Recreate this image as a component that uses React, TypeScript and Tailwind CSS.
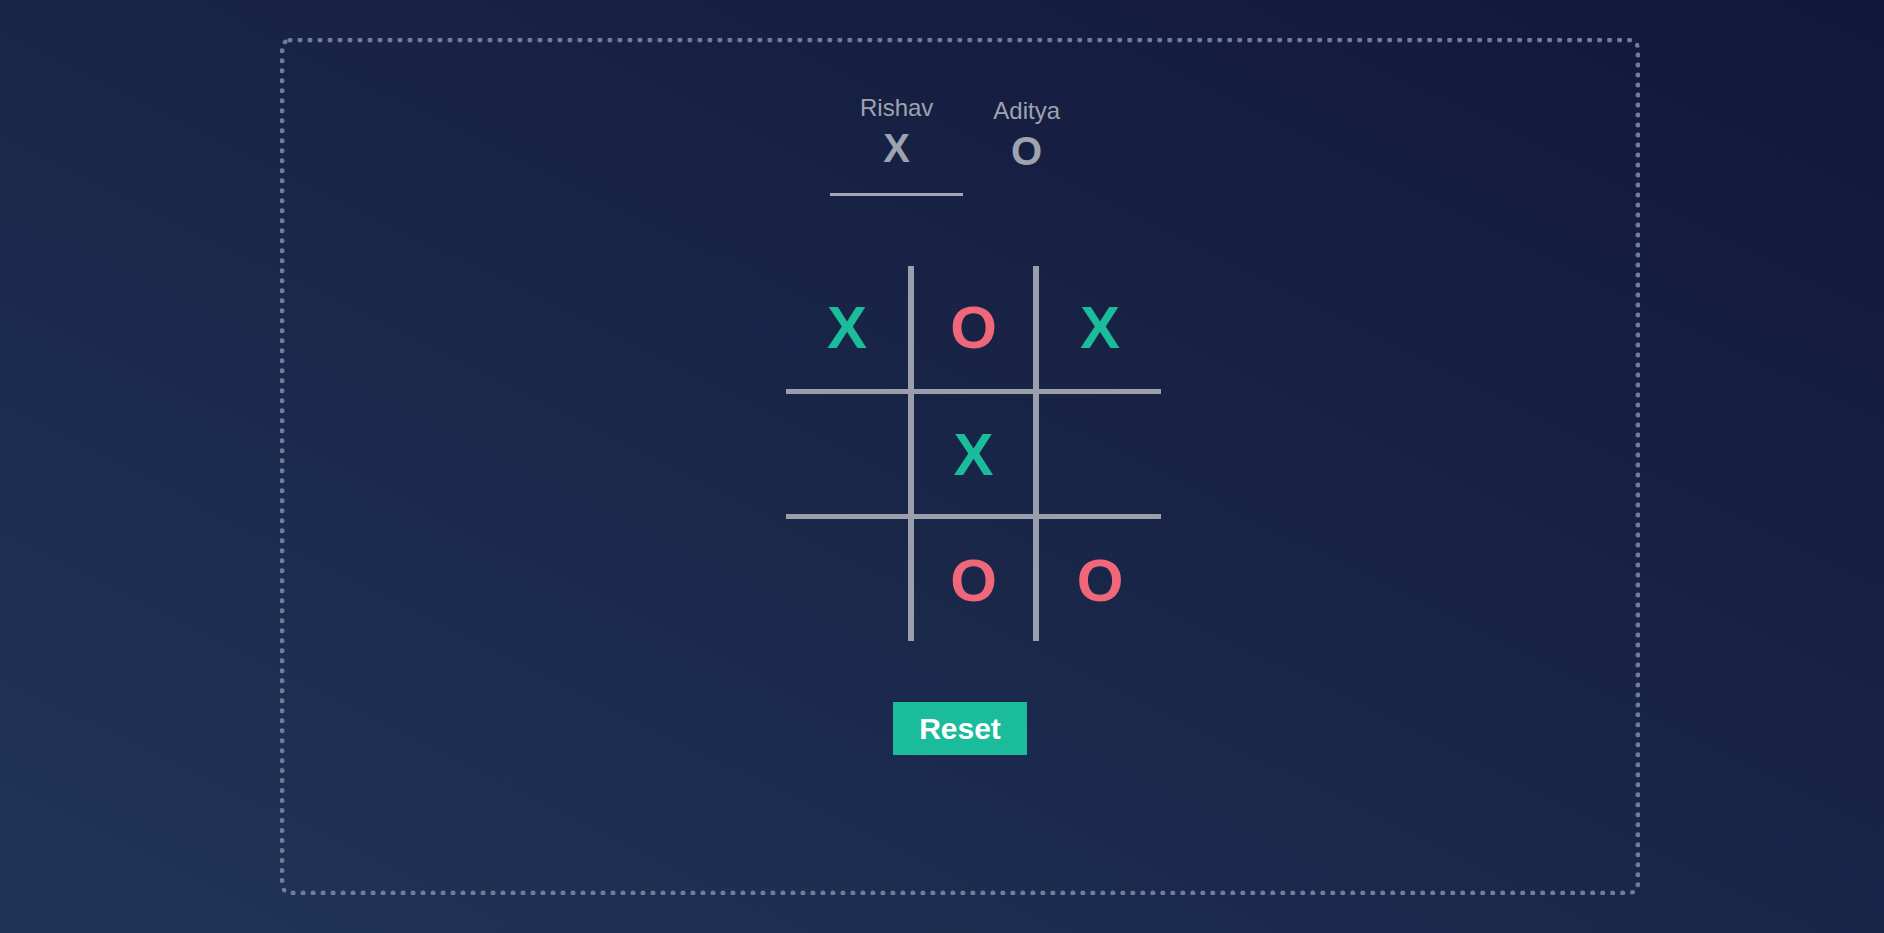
const board: string[] = ["X", "O", "X", "", "X", "", "", "O", "O"];

const colBorder = ["border-r-[3px]", "border-l-[3px] border-r-[3px]", "border-l-[3px]"];
const rowBorder = ["border-b-[2px]", "border-t-[3px] border-b-[2px]", "border-t-[3px]"];

function Cell({ value, index }: { value: string; index: number }) {
  const col = index % 3;
  const row = Math.floor(index / 3);
  return (
    <div
      className={`w-[125px] h-[125px] flex items-center justify-center border-[#9a9fab] text-[60px] leading-[69px] font-bold ${colBorder[col]} ${rowBorder[row]} ${
        value === "X" ? "text-[#1abc9c]" : "text-[#f0677a]"
      }`}
    >
      {value}
    </div>
  );
}

export default function App() {
  return (
    <div
      className="h-[933px] w-full overflow-hidden pt-[38px] bg-[linear-gradient(to_top_right,#203556,#12163a)]"
      style={{ fontFamily: '"Liberation Sans", Arial, sans-serif' }}
    >
      <div className="ml-[280px] w-[1360px] h-[857px] rounded-[10px] border-[5px] border-dotted border-[#6f7c9b] flex flex-col items-center pt-[51px]">
        {/* players */}
        <div className="flex items-start">
          <div className="px-[30px] pb-[22px] border-b-[3px] border-[#a2a7b3] flex flex-col items-center">
            <span className="text-[24px] leading-[28px] text-[#9ea3af]">Rishav</span>
            <span className="mt-[3px] text-[40px] leading-[46px] font-bold text-[#9ea3af]">X</span>
          </div>
          <div className="px-[30px] pt-[3px] flex flex-col items-center">
            <span className="text-[24px] leading-[28px] text-[#9ea3af]">Aditya</span>
            <span className="mt-[3px] text-[40px] leading-[46px] font-bold text-[#9ea3af]">O</span>
          </div>
        </div>

        {/* board */}
        <div className="mt-[70px] ml-[27px] grid grid-cols-3">
          {board.map((v, i) => (
            <Cell key={i} value={v} index={i} />
          ))}
        </div>

        <button className="mt-[61px] w-[134px] h-[53px] bg-[#1abc9c] text-white text-[30px] font-bold leading-none">
          Reset
        </button>
      </div>
    </div>
  );
}
